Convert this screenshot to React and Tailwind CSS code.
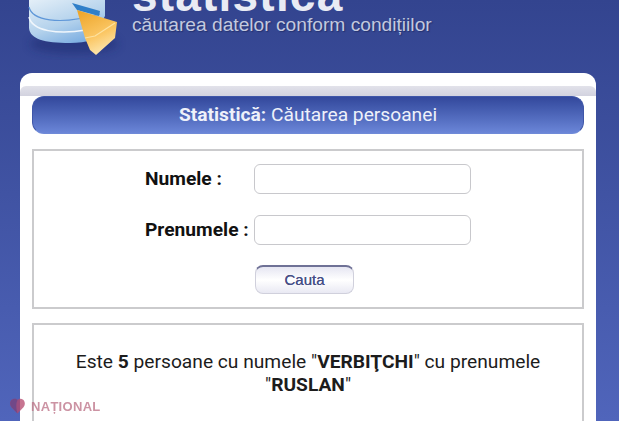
export default function App() {
    return (
        <div className="relative h-[421px] w-full overflow-hidden bg-gradient-to-b from-[#33448f] to-[#5065bb] font-['Roboto',sans-serif]">
            {/* Logo + title */}
            <header className="flex h-[73px] items-start pl-[28px]">
                <Logo />
                <div className="ml-[12px] flex flex-col font-['Liberation_Sans',sans-serif]">
                    <h1 className="mt-[-28px] h-[46px] text-[46px] font-bold leading-[46px] tracking-[1.2px] text-[#e9ebf4]">statistica</h1>
                    <p className="mt-[-4px] text-[19.2px] leading-[22px] whitespace-nowrap text-[#c3c9df] [text-shadow:1px_1px_1px_rgba(20,30,80,0.5)]">căutarea datelor conform condițiilor</p>
                </div>
            </header>

            {/* Card */}
            <main className="mx-5 h-[400px] w-[576px] rounded-t-xl bg-white pt-[13px]">
                <div className="h-[10px] rounded-t-md bg-gradient-to-b from-[#e2e2ea] to-[#d2d2df]" />
                <div className="px-3">
                    <div className="flex h-[38px] items-center justify-center rounded-xl border border-[#3f56a8] border-b-[#6f8ad8] bg-gradient-to-b from-[#33489c] to-[#6b86d8] text-[19.2px] text-[#eef1fa]">
                        <b className="font-bold">Statistică:</b>&nbsp;Căutarea persoanei
                    </div>

                    {/* Search form */}
                    <section className="mt-[15px] flex h-[160px] flex-col border-2 border-[#cbcbcd] pl-[111px] pt-[13px]">
                        <div className="flex items-center">
                            <label className="w-[109px] text-[19.2px] font-bold text-[#111]">Numele :</label>
                            <input className="h-[30px] w-[217px] rounded-md border border-[#c8c8cc] bg-white" />
                        </div>
                        <div className="mt-[21px] flex items-center">
                            <label className="w-[109px] text-[19.2px] font-bold whitespace-nowrap text-[#111]">Prenumele :</label>
                            <input className="h-[30px] w-[217px] rounded-md border border-[#c8c8cc] bg-white" />
                        </div>
                        <button className="mt-[20px] ml-[110px] h-[29px] w-[99px] rounded-lg border border-[#d0d0dc] border-t-2 border-t-[#6f7196] bg-gradient-to-b from-[#e6e6f2] via-white to-[#e9e9f3] font-['Liberation_Sans',sans-serif] text-[15px] font-normal text-[#474f86] [text-shadow:0_0_0.6px_#474f86]">
                            Cauta
                        </button>
                    </section>

                    {/* Result */}
                    <section className="mt-[14px] h-[120px] border-2 border-[#cbcbcd] px-6 pt-[25px] text-center text-[19.2px] leading-[23px] text-[#1c1c1c]">
                        Este <b>5</b> persoane cu numele "<b>VERBIŢCHI</b>" cu prenumele
                        <br />
                        "<b>RUSLAN</b>"
                    </section>
                </div>
            </main>

            {/* Watermark */}
            <div className="absolute bottom-[5px] left-[10px] flex items-center gap-[6px] opacity-75">
                <svg width="15" height="16" viewBox="0 0 15 16">
                    <path d="M7.5 15.5 1.5 9.2C-.4 7-.2 3.6 1.8 1.8 3.6.2 6.2.3 7.5 2c1.3-1.7 3.9-1.8 5.7-.2 2 1.8 2.2 5.2.3 7.4Z" fill="#b5476d" />
                    <path d="M7.5 2c-1.6 3-1.6 9 0 13.5L1.5 9.2C-.4 7-.2 3.6 1.8 1.8 3.6.2 6.2.3 7.5 2Z" fill="#7c3f78" />
                </svg>
                <span className="font-['Liberation_Sans',sans-serif] text-[13px] font-bold tracking-[0.3px] text-[#bb6f85]">NAȚIONAL</span>
            </div>
        </div>
    );
}

function Logo() {
    return (
        <svg width="92" height="58" viewBox="0 0 92 58" className="shrink-0 overflow-visible">
            <defs>
                <linearGradient id="disk" x1="0" y1="0" x2="0.6" y2="1">
                    <stop offset="0" stopColor="#e4eff8" />
                    <stop offset="0.6" stopColor="#b4d2ec" />
                    <stop offset="1" stopColor="#7fb0e2" />
                </linearGradient>
                <linearGradient id="slice" x1="0.2" y1="0" x2="0.6" y2="1">
                    <stop offset="0" stopColor="#eda62c" />
                    <stop offset="0.6" stopColor="#fbc765" />
                    <stop offset="1" stopColor="#fde9b4" />
                </linearGradient>
                <filter id="soft" x="-30%" y="-30%" width="160%" height="160%">
                    <feGaussianBlur stdDeviation="4" />
                </filter>
            </defs>
            <ellipse cx="46" cy="44" rx="44" ry="10" fill="#1f2c70" opacity="0.5" filter="url(#soft)" />
            <path d="M1 0V28C2 39 16 43 42 43 50 43 58 42 64 40L77 16V0Z" fill="url(#disk)" />
            <path d="M1 7C4 20 30 26 72 14" fill="none" stroke="#5f97d8" strokeWidth="1.2" />
            <path d="M1 17C4 31 30 35 58 30" fill="none" stroke="#f0f6fc" strokeWidth="1.5" />
            <path d="M44 3 72 11 71 16 49 10Z" fill="#2f7fc9" />
            <path d="M49 10 89 22 87 38 68 55 62 50 57 38Z" fill="url(#slice)" />
            <path d="M57 38 67 36 87 23" fill="none" stroke="#fde2a0" strokeWidth="1.2" />
        </svg>
    );
}
